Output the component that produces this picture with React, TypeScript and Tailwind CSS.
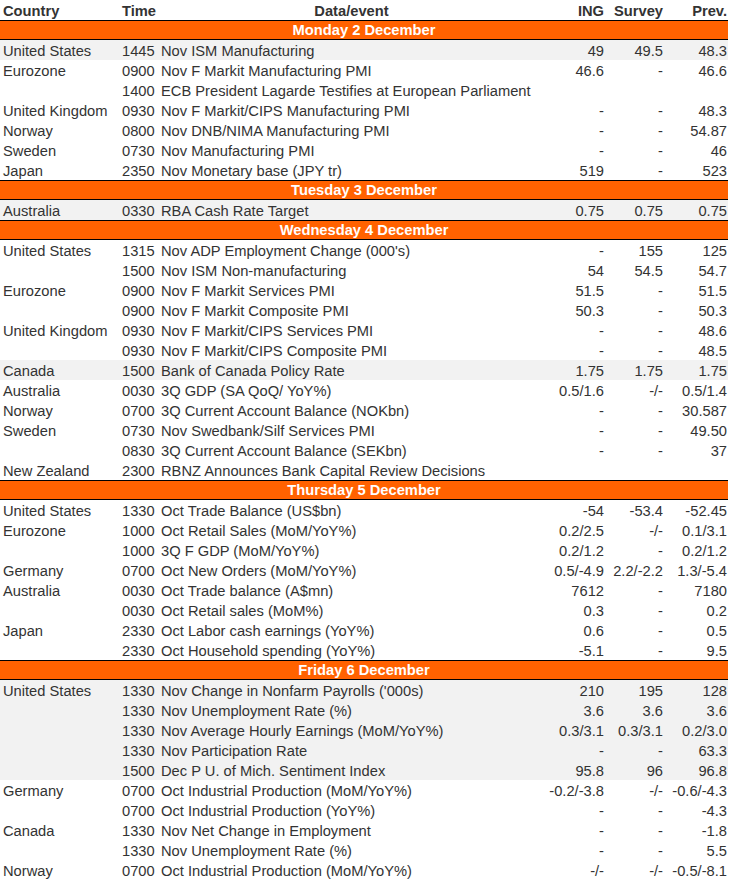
type Row = {
  country?: string;
  time: string;
  event: string;
  ing?: string;
  survey?: string;
  prev?: string;
  hl?: boolean;
};

type Day = { title: string; rows: Row[] };

const days: Day[] = [
  {
    title: "Monday 2 December",
    rows: [
      { country: "United States", time: "1445", event: "Nov ISM Manufacturing", ing: "49", survey: "49.5", prev: "48.3", hl: true },
      { country: "Eurozone", time: "0900", event: "Nov F Markit Manufacturing PMI", ing: "46.6", survey: "-", prev: "46.6" },
      { time: "1400", event: "ECB President Lagarde Testifies at European Parliament" },
      { country: "United Kingdom", time: "0930", event: "Nov F Markit/CIPS Manufacturing PMI", ing: "-", survey: "-", prev: "48.3" },
      { country: "Norway", time: "0800", event: "Nov DNB/NIMA Manufacturing PMI", ing: "-", survey: "-", prev: "54.87" },
      { country: "Sweden", time: "0730", event: "Nov Manufacturing PMI", ing: "-", survey: "-", prev: "46" },
      { country: "Japan", time: "2350", event: "Nov Monetary base (JPY tr)", ing: "519", survey: "-", prev: "523" },
    ],
  },
  {
    title: "Tuesday 3 December",
    rows: [
      { country: "Australia", time: "0330", event: "RBA Cash Rate Target", ing: "0.75", survey: "0.75", prev: "0.75", hl: true },
    ],
  },
  {
    title: "Wednesday 4 December",
    rows: [
      { country: "United States", time: "1315", event: "Nov ADP Employment Change (000's)", ing: "-", survey: "155", prev: "125" },
      { time: "1500", event: "Nov ISM Non-manufacturing", ing: "54", survey: "54.5", prev: "54.7" },
      { country: "Eurozone", time: "0900", event: "Nov F Markit Services PMI", ing: "51.5", survey: "-", prev: "51.5" },
      { time: "0900", event: "Nov F Markit Composite PMI", ing: "50.3", survey: "-", prev: "50.3" },
      { country: "United Kingdom", time: "0930", event: "Nov F Markit/CIPS Services PMI", ing: "-", survey: "-", prev: "48.6" },
      { time: "0930", event: "Nov F Markit/CIPS Composite PMI", ing: "-", survey: "-", prev: "48.5" },
      { country: "Canada", time: "1500", event: "Bank of Canada Policy Rate", ing: "1.75", survey: "1.75", prev: "1.75", hl: true },
      { country: "Australia", time: "0030", event: "3Q GDP (SA QoQ/ YoY%)", ing: "0.5/1.6", survey: "-/-", prev: "0.5/1.4" },
      { country: "Norway", time: "0700", event: "3Q Current Account Balance (NOKbn)", ing: "-", survey: "-", prev: "30.587" },
      { country: "Sweden", time: "0730", event: "Nov Swedbank/Silf Services PMI", ing: "-", survey: "-", prev: "49.50" },
      { time: "0830", event: "3Q Current Account Balance (SEKbn)", ing: "-", survey: "-", prev: "37" },
      { country: "New Zealand", time: "2300", event: "RBNZ Announces Bank Capital Review Decisions" },
    ],
  },
  {
    title: "Thursday 5 December",
    rows: [
      { country: "United States", time: "1330", event: "Oct Trade Balance (US$bn)", ing: "-54", survey: "-53.4", prev: "-52.45" },
      { country: "Eurozone", time: "1000", event: "Oct Retail Sales (MoM/YoY%)", ing: "0.2/2.5", survey: "-/-", prev: "0.1/3.1" },
      { time: "1000", event: "3Q F GDP (MoM/YoY%)", ing: "0.2/1.2", survey: "-", prev: "0.2/1.2" },
      { country: "Germany", time: "0700", event: "Oct New Orders (MoM/YoY%)", ing: "0.5/-4.9", survey: "2.2/-2.2", prev: "1.3/-5.4" },
      { country: "Australia", time: "0030", event: "Oct Trade balance (A$mn)", ing: "7612", survey: "-", prev: "7180" },
      { time: "0030", event: "Oct Retail sales (MoM%)", ing: "0.3", survey: "-", prev: "0.2" },
      { country: "Japan", time: "2330", event: "Oct Labor cash earnings (YoY%)", ing: "0.6", survey: "-", prev: "0.5" },
      { time: "2330", event: "Oct Household spending (YoY%)", ing: "-5.1", survey: "-", prev: "9.5" },
    ],
  },
  {
    title: "Friday 6 December",
    rows: [
      { country: "United States", time: "1330", event: "Nov Change in Nonfarm Payrolls ('000s)", ing: "210", survey: "195", prev: "128", hl: true },
      { time: "1330", event: "Nov Unemployment Rate (%)", ing: "3.6", survey: "3.6", prev: "3.6", hl: true },
      { time: "1330", event: "Nov Average Hourly Earnings (MoM/YoY%)", ing: "0.3/3.1", survey: "0.3/3.1", prev: "0.2/3.0", hl: true },
      { time: "1330", event: "Nov Participation Rate", ing: "-", survey: "-", prev: "63.3", hl: true },
      { time: "1500", event: "Dec P U. of Mich. Sentiment Index", ing: "95.8", survey: "96", prev: "96.8", hl: true },
      { country: "Germany", time: "0700", event: "Oct Industrial Production (MoM/YoY%)", ing: "-0.2/-3.8", survey: "-/-", prev: "-0.6/-4.3" },
      { time: "0700", event: "Oct Industrial Production (YoY%)", ing: "-", survey: "-", prev: "-4.3" },
      { country: "Canada", time: "1330", event: "Nov Net Change in Employment", ing: "-", survey: "-", prev: "-1.8" },
      { time: "1330", event: "Nov Unemployment Rate (%)", ing: "-", survey: "-", prev: "5.5" },
      { country: "Norway", time: "0700", event: "Oct Industrial Production (MoM/YoY%)", ing: "-/-", survey: "-/-", prev: "-0.5/-8.1" },
    ],
  },
];

const grid = "grid grid-cols-[119px_39px_387px_60px_59px_64px] h-[20px] leading-[22px] whitespace-nowrap";

export default function App() {
  return (
    <div className="w-[730px] bg-white text-[#333333] text-[14.7px] font-['Liberation_Sans',Arial,sans-serif]">
      <div className="w-[728px]">
        <div className={`${grid} font-bold`}>
          <div className="pl-[3px]">Country</div>
          <div className="pl-[3px]">Time</div>
          <div className="text-center">Data/event</div>
          <div className="text-right pr-[1px]">ING</div>
          <div className="text-right pr-[1px]">Survey</div>
          <div className="text-right pr-[1px]">Prev.</div>
        </div>
        {days.map((d) => (
          <div key={d.title}>
            <div className="h-[20px] leading-[19px] border-y border-black bg-[#ff6200] text-white font-bold text-center">
              {d.title}
            </div>
            {d.rows.map((r, i) => (
              <div key={i} className={`${grid} ${r.hl ? "bg-[#f2f2f2]" : ""}`}>
                <div className="pl-[3px]">{r.country ?? ""}</div>
                <div className="pl-[3px]">{r.time}</div>
                <div className="pl-[3px]">{r.event}</div>
                <div className="text-right pr-[1px]">{r.ing ?? ""}</div>
                <div className="text-right pr-[1px]">{r.survey ?? ""}</div>
                <div className="text-right pr-[1px]">{r.prev ?? ""}</div>
              </div>
            ))}
          </div>
        ))}
      </div>
    </div>
  );
}
